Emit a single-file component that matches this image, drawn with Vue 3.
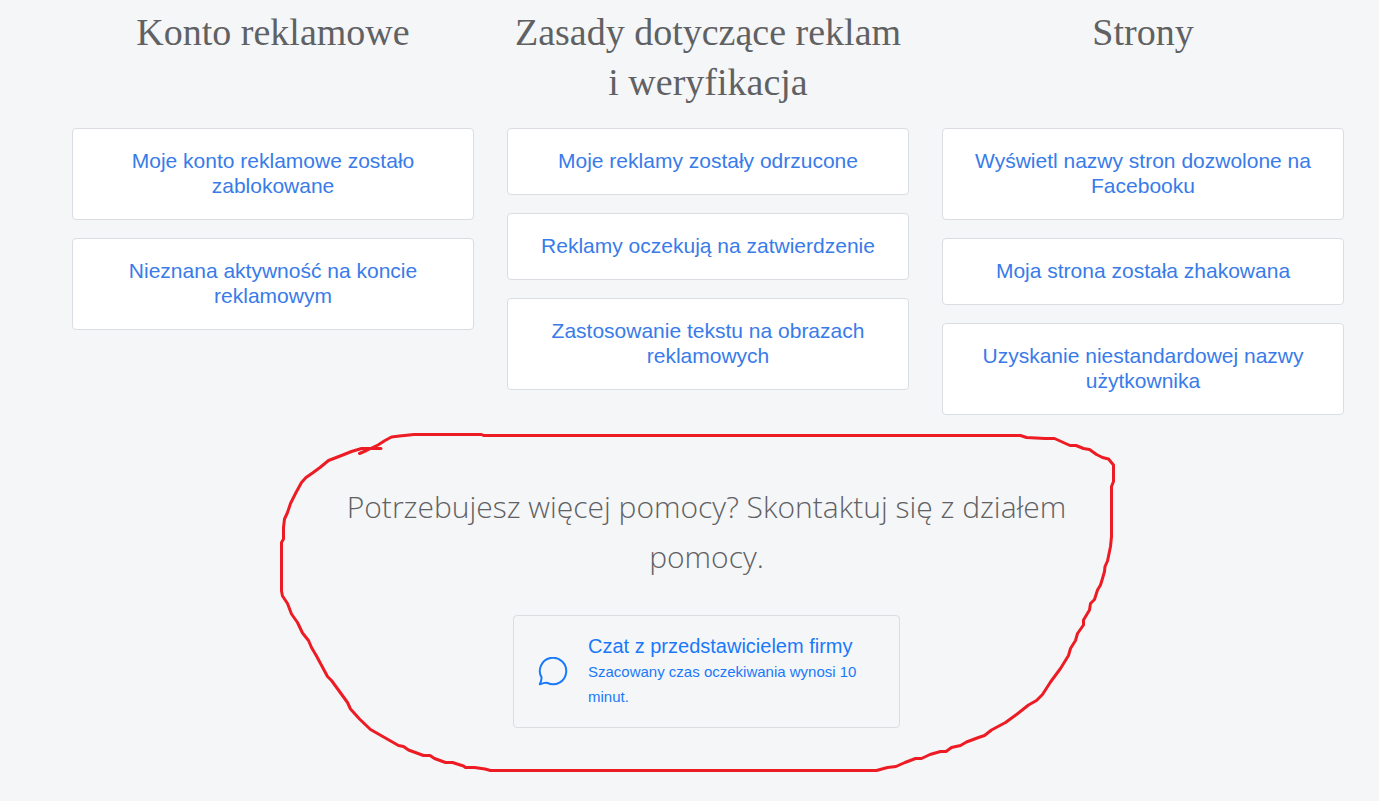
<script setup>
const columns = [
  {
    title: 'Konto reklamowe',
    links: ['Moje konto reklamowe zostało zablokowane', 'Nieznana aktywność na koncie reklamowym'],
  },
  {
    title: 'Zasady dotyczące reklam i\u00a0weryfikacja',
    links: [
      'Moje reklamy zostały odrzucone',
      'Reklamy oczekują na zatwierdzenie',
      'Zastosowanie tekstu na obrazach reklamowych',
    ],
  },
  {
    title: 'Strony',
    links: [
      'Wyświetl nazwy stron dozwolone na Facebooku',
      'Moja strona została zhakowana',
      'Uzyskanie niestandardowej nazwy użytkownika',
    ],
  },
]
</script>

<template>
  <main class="page">
    <div class="topics">
      <section v-for="column in columns" :key="column.title" class="topic">
        <h2 class="topic-title">{{ column.title }}</h2>
        <div class="topic-links">
          <a v-for="link in column.links" :key="link" class="card" href="#">{{ link }}</a>
        </div>
      </section>
    </div>

    <section class="help">
      <svg class="marker" viewBox="280 433 856 339" aria-hidden="true">
        <path
          d="M381 448.5H361.5L351.5 451.5 341.5 455.5 328.5 460.5 320 467.5 312.5 473 306 477.5 301.5 482.5 296 492.5 290.5 503.5 287.5 512.5 284.5 519 283.5 527.5V539L281.5 542.5V591L282.5 596 287.5 603.5 291.5 614 297.5 622.5 302.5 633 308.5 640.5 311.5 647.5 316.5 656 327.5 676.5 331.5 680.5 347.5 702.5 350.5 709 359.5 719 370.5 729.5 381 735.5 398.5 745.5 403.5 746.5 408.5 750 423.5 755.5H430L434.5 758.5 445.5 762.5H452.5L463.5 766 465.5 767.5H474.5L485 769 490.5 770.5H876.5L887.5 767.5 896 766.5 905 762.5 915.5 758.5H921.5L930 754.5 940.5 751.5H946L951.5 747.5 960.5 745.5 966.5 742 978.5 737.5 984.5 735.5 991.5 730 1005.5 722.5 1016.5 714.5 1028.5 705 1036.5 700.5 1042.5 694.5 1050.5 682 1060.5 668.5 1068.5 655.5 1070.5 648.5 1075.5 640.5 1077.5 633.5 1083.5 625V620L1089.5 610 1090.5 603.5 1094.5 599.5 1097.5 590 1100.5 585 1102.5 578.5 1104.5 571.5 1105 566.5 1107.5 561 1110.5 546.5 1111.5 536.5V486.5L1113.5 481.5V465L1108.5 459 1102.5 457.5 1096.5 454.5 1089.5 449.5 1083.5 448.5 1076 445.5H1070L1054.5 438.5H1045L1026.5 437.5 1020.5 435.5H483.5L481.5 434.5H414L399.5 436 391.5 437 385 440.5 378 445 366.5 450.5 359.5 453.5"
        />
      </svg>
      <h2 class="help-title">Potrzebujesz więcej pomocy? Skontaktuj się z działem pomocy.</h2>
      <button class="chat" type="button">
        <svg class="chat-icon" viewBox="0 0 30 30" aria-hidden="true">
          <path d="M3.6 20.6A13.2 13.2 0 1 1 9.5 26Q7.6 25.2 1.8 27.3Q3.4 24 3.6 20.6Z" />
        </svg>
        <span class="chat-text">
          <span class="chat-name">Czat z przedstawicielem firmy</span>
          <span class="chat-wait">Szacowany czas oczekiwania wynosi 10 minut.</span>
        </span>
      </button>
    </section>
  </main>
</template>

<style>
body {
  background: #f5f6f8;
}
</style>

<style scoped>
.page {
  box-sizing: border-box;
  padding: 7px 35px 29px 72px;
  font-family: "Liberation Sans", Arial, sans-serif;
}

.topics {
  display: grid;
  grid-template-columns: repeat(3, minmax(0, 1fr));
  grid-template-rows: auto auto;
  gap: 21px 33px;
}

.topic {
  display: grid;
  grid-row: span 2;
  grid-template-rows: subgrid;
}

.topic-title {
  margin: 0;
  color: #606163;
  font: 400 38px/50px "Liberation Serif", "Times New Roman", serif;
  text-align: center;
}

.topic-links {
  display: flex;
  flex-direction: column;
  gap: 18px;
}

.card {
  padding: 19px 24px 21px;
  border: 1px solid #dadde1;
  border-radius: 4px;
  background: #fff;
  color: #387be9;
  font-size: 21px;
  line-height: 25px;
  text-align: center;
  text-decoration: none;
}

.help {
  position: relative;
  display: flex;
  flex-direction: column;
  align-items: center;
  max-width: 853px;
  margin: 18px auto 0;
  padding: 49px 3px 44px 0;
}

.marker {
  position: absolute;
  inset: 0;
  width: 100%;
  height: 100%;
  overflow: visible;
  pointer-events: none;
}

.marker path {
  fill: none;
  stroke: #ed1c24;
  stroke-width: 3;
  stroke-linecap: round;
  stroke-linejoin: round;
}

.help-title {
  max-width: 770px;
  margin: 0;
  color: #606163;
  font: 300 30px/50px "Open Sans", "Noto Sans", sans-serif;
  text-align: center;
}

.chat {
  display: flex;
  align-items: center;
  gap: 20px;
  width: 387px;
  max-width: 100%;
  margin-top: 33px;
  padding: 18px 24px;
  border: 1px solid #dadde1;
  border-radius: 4px;
  background: transparent;
  color: #1a79fa;
  font-family: inherit;
  text-align: left;
}

.chat-icon {
  flex: none;
  width: 30px;
  height: 30px;
}

.chat-icon path {
  fill: none;
  stroke: currentColor;
  stroke-width: 2;
  stroke-linejoin: round;
}

.chat-name,
.chat-wait {
  display: block;
  line-height: 25px;
}

.chat-name {
  font-size: 20px;
}

.chat-wait {
  font-size: 15px;
}
</style>
